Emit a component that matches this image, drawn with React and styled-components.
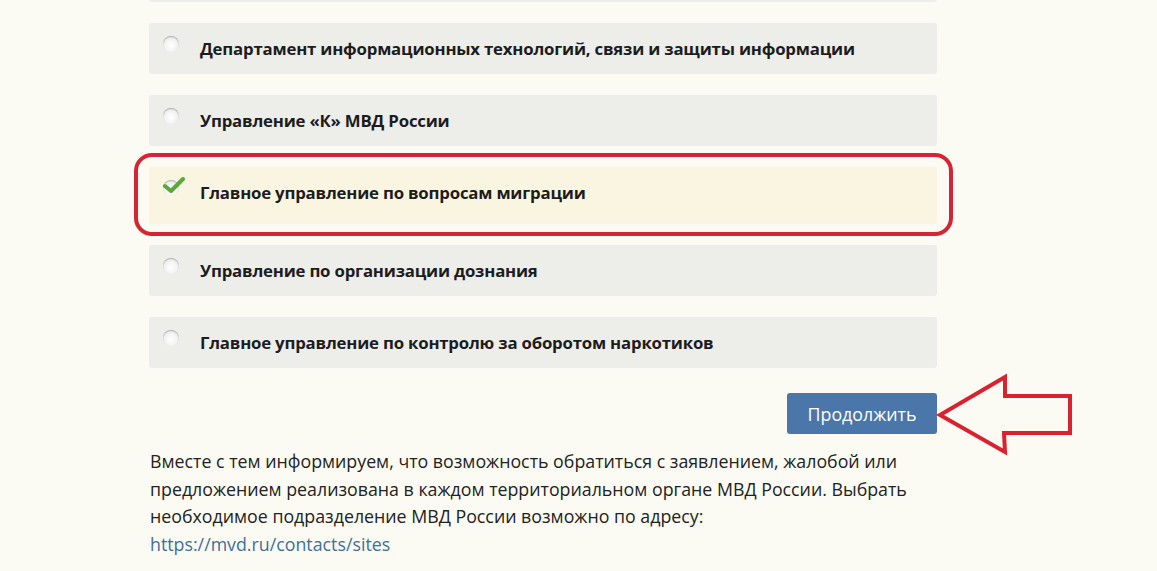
import React from "react";
import styled, { createGlobalStyle } from "styled-components";

const Global = createGlobalStyle`
  html, body { margin: 0; padding: 0; background: #fbfbf3; }
  body { font-family: "Open Sans", "Noto Sans", sans-serif; color: #222; overflow: hidden; }
`;

const Page = styled.div`
  width: 1157px;
  height: 571px;
  overflow: hidden;
  background: #fbfbf3;
`;

const Column = styled.div`
  margin-left: 149px;
  width: 788px;
  margin-top: -49px;
`;

const List = styled.div`
  display: flex;
  flex-direction: column;
  gap: 21px;
`;

const Option = styled.label`
  position: relative;
  display: flex;
  align-items: center;
  height: ${(p) => (p.$selected ? "57px" : "51px")};
  box-sizing: border-box;
  padding-left: 14px;
  padding-bottom: ${(p) => (p.$selected ? "6px" : "0")};
  background: ${(p) => (p.$selected ? "#faf5e1" : "#ededea")};
  border-radius: 3px;
  cursor: pointer;
  ${(p) =>
    p.$selected &&
    `
    &::after {
      content: "";
      position: absolute;
      top: -14px; bottom: -12px; left: -15px; right: -16px;
      border: 4px solid #d42535;
      border-radius: 18px;
      pointer-events: none;
    }
  `}
`;

const Radio = styled.span`
  position: relative;
  flex: none;
  width: 16px;
  height: 16px;
  margin-top: -9px;
  border-radius: 50%;
  background: radial-gradient(circle at 50% 60%, #ffffff 0%, #f4f4f4 45%, #dcdcdc 100%);
  box-shadow: inset 0 1px 1px rgba(0, 0, 0, 0.25);
`;

const Check = styled.svg`
  position: absolute;
  left: 0px;
  top: -3px;
  width: 22px;
  height: 18px;
`;

const Label = styled.span`
  margin-left: 21px;
  font-size: 16.8px;
  font-weight: 700;
  letter-spacing: -0.2px;
  color: #1c1c1c;
`;

const Actions = styled.div`
  position: relative;
  display: flex;
  justify-content: flex-end;
  margin-top: 25px;
`;

const Button = styled.button`
  width: 150px;
  height: 41px;
  border: none;
  border-radius: 3px;
  background: #4b76aa;
  color: #fff;
  font-family: "Open Sans", "Noto Sans", sans-serif;
  font-size: 17.8px;
  padding: 0;
  cursor: pointer;
`;

const Arrow = styled.svg`
  position: absolute;
  left: 787px;
  top: -20px;
  width: 140px;
  height: 84px;
`;

const Text = styled.p`
  margin: 14px 0 0 1px;
  font-size: 17.8px;
  line-height: 27.7px;
  color: #222;
`;

const Link = styled.a`
  color: #3e6f9c;
  text-decoration: none;
`;

const options = [
  "",
  "Департамент информационных технологий, связи и защиты информации",
  "Управление «К» МВД России",
  "Главное управление по вопросам миграции",
  "Управление по организации дознания",
  "Главное управление по контролю за оборотом наркотиков",
];

export default function App() {
  const selected = 3;
  return (
    <Page>
      <Global />
      <Column>
        <List>
          {options.map((o, i) => (
            <Option key={i} $selected={i === selected}>
              {o && (
                <>
                  <Radio>
                    {i === selected && (
                      <Check viewBox="0 0 22 18">
                        <path d="M2 9 L8 14 L20 2" fill="none" stroke="#5aa83a" strokeWidth="4" strokeLinecap="round" strokeLinejoin="round" />
                      </Check>
                    )}
                  </Radio>
                  <Label>{o}</Label>
                </>
              )}
            </Option>
          ))}
        </List>
        <Actions>
          <Button>Продолжить</Button>
          <Arrow viewBox="0 0 140 84">
            <polygon points="4,42 69,4 69,23 134,23 134,60 68,60 69,79" fill="none" stroke="#d9212f" strokeWidth="4" strokeLinejoin="miter" />
          </Arrow>
        </Actions>
        <Text>
          Вместе с тем информируем, что возможность обратиться с заявлением, жалобой или
          предложением реализована в каждом территориальном органе МВД России. Выбрать
          необходимое подразделение МВД России возможно по адресу:
          <br />
          <Link href="#">https://mvd.ru/contacts/sites</Link>
        </Text>
      </Column>
    </Page>
  );
}
